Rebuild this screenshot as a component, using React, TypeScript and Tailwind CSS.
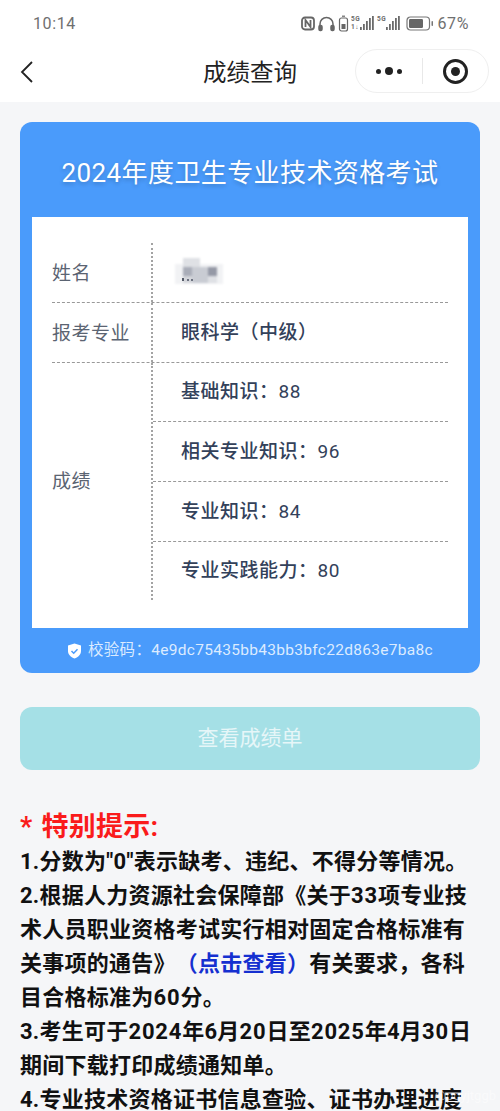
const FONT = 'font-["Roboto","Noto_Sans_CJK_SC",sans-serif]';

const SCORES = [
  { label: "基础知识", value: "88", height: "h-[59px]" },
  { label: "相关专业知识", value: "96", height: "h-[60px]" },
  { label: "专业知识", value: "84", height: "h-[60px]" },
  { label: "专业实践能力", value: "80", height: "h-[58px]" },
];

function Signal({ top, bottom }: { top: string; bottom?: string }) {
  return (
    <svg width="24" height="17" viewBox="0 0 24 17" fill="#6b6b6b">
      <text x="0" y="6" fontSize="6.500" fontWeight="700" fontFamily="Roboto">{top}</text>
      {bottom && <text x="0" y="14" fontSize="6.500" fontWeight="700" fontFamily="Roboto">{bottom}</text>}
      <rect x="9" y="12" width="1.800" height="3" />
      <rect x="12" y="9" width="1.800" height="6" />
      <rect x="15" y="6" width="1.800" height="9" />
      <rect x="18" y="3" width="1.800" height="12" />
      <rect x="21" y="1" width="1.800" height="14" />
    </svg>
  );
}

function StatusBar() {
  return (
    <div className="flex h-[46px] items-center justify-between pl-[33px] pr-[31px] pt-[1px] text-[16px] tracking-[0.6px] text-[#6f6f6f]">
      <span>10:14</span>
      <div className="flex items-center gap-[2px]">
        <svg width="14" height="15" viewBox="0 0 14 15" fill="none" stroke="#666" strokeWidth="1.800">
          <rect x="1" y="1.500" width="12" height="12" rx="3" />
          <path d="M4.500 11V4l5 7V4" />
        </svg>
        <svg width="17" height="17" viewBox="0 0 17 17" fill="none" stroke="#666" strokeWidth="1.500" className="ml-[1px]">
          <path d="M2 13V9a6.500 6.500 0 0 1 13 0v4" />
          <rect x="1" y="10.500" width="3" height="5" rx="1.200" fill="#666" />
          <rect x="13" y="10.500" width="3" height="5" rx="1.200" fill="#666" />
        </svg>
        <svg width="11" height="17" viewBox="0 0 11 17" fill="none" stroke="#666" strokeWidth="1.200" className="ml-[1px]">
          <rect x="1.500" y="3" width="8" height="13" rx="2" />
          <path d="M4 1.200h3" />
          <rect x="3.500" y="9" width="4" height="5" fill="#666" stroke="none" />
        </svg>
        <Signal top="5G" bottom="1↓" />
        <Signal top="5G" />
        <svg width="28" height="15" viewBox="0 0 28 15" fill="none" className="ml-[3px]">
          <rect x="1" y="1" width="22.500" height="13" rx="3.500" stroke="#777" strokeWidth="1.200" />
          <rect x="3" y="3" width="14" height="9" rx="1.200" fill="#666" />
          <rect x="25.500" y="5" width="1.500" height="5" rx="0.700" fill="#777" />
        </svg>
        <span className="ml-[1px]">67%</span>
      </div>
    </div>
  );
}

function NavBar() {
  return (
    <div className="relative flex h-[56px] items-center justify-center">
      <svg width="14" height="24" viewBox="0 0 14 24" fill="none" stroke="#222" strokeWidth="1.800" className="absolute left-[20px] top-[14px]">
        <path d="M12 2 2 12l10 10" />
      </svg>
      <h1 className="text-[23.500px] text-[#222]">成绩查询</h1>
      <div className="absolute right-[11px] top-[3px] flex h-[44px] w-[134px] items-center rounded-full border border-[#efefef]">
        <div className="flex w-[66px] items-center justify-center gap-[4px]">
          <span className="h-[5px] w-[5px] rounded-full bg-[#222]" />
          <span className="h-[8px] w-[8px] rounded-full bg-[#222]" />
          <span className="h-[5px] w-[5px] rounded-full bg-[#222]" />
        </div>
        <div className="h-[26px] w-px bg-[#e8e8e8]" />
        <div className="flex flex-1 items-center justify-center">
          <div className="flex h-[25px] w-[25px] items-center justify-center rounded-full border-[3px] border-[#222]">
            <div className="h-[9px] w-[9px] rounded-full bg-[#222]" />
          </div>
        </div>
      </div>
    </div>
  );
}

// mosaic over the candidate's name
function BlurredName() {
  return (
    <div className="relative h-[30px] w-[50px]">
      <div className="absolute inset-0 blur-[0.8px]">
        <div className="absolute left-0 top-[6px] h-[20px] w-[48px] bg-[#f1f2f4]" />
        <div className="absolute left-[8px] top-0 h-[9px] w-[17px] bg-[#dfe1e5]" />
        <div className="absolute left-[8px] top-[9px] h-[9px] w-[9px] bg-[#a9adb8]" />
        <div className="absolute left-[17px] top-[9px] h-[16px] w-[16px] bg-[#c9ccd3]" />
        <div className="absolute left-[33px] top-[9px] h-[9px] w-[9px] bg-[#9599a6]" />
        <div className="absolute left-[8px] top-[18px] h-[7px] w-[9px] bg-[#d4d6db]" />
        <div className="absolute left-[33px] top-[18px] h-[7px] w-[9px] bg-[#dfe1e5]" />
      </div>
      <div className="absolute left-[7px] top-[20px] h-[3px] w-[2px] bg-[#555b68]" />
      <div className="absolute left-[12px] top-[21px] h-[2px] w-[2px] bg-[#6d7280]" />
      <div className="absolute left-[16px] top-[21px] h-[2px] w-[2px] bg-[#6d7280]" />
    </div>
  );
}

function ResultCard() {
  return (
    <section className="rounded-[12px] bg-[#4a9bfb] px-[12px]">
      <h2 className="flex h-[95px] items-center justify-center pt-[8px] text-[26px] tracking-[0.4px] text-white [text-shadow:0_2px_4px_rgba(0,0,0,0.2)]">
        2024年度卫生专业技术资格考试
      </h2>
      <div className="bg-white px-[20px] pb-[28px] pt-[26px] text-[19px] tracking-[0.5px]">
        <div className="flex h-[60px] border-b border-dashed border-[#999]">
          <div className="flex w-[99px] items-center pt-[3px] text-[#5b6472]">姓名</div>
          <div className="flex flex-1 items-center border-l-2 border-dotted border-[#a3a3a3] pl-[22px]">
            <BlurredName />
          </div>
        </div>
        <div className="flex h-[60px] border-b border-dashed border-[#999]">
          <div className="flex w-[99px] items-center pt-[3px] text-[#5b6472]">报考专业</div>
          <div className="flex flex-1 items-center border-l-2 border-dotted border-[#a3a3a3] pl-[28px] pt-[2px] font-medium text-[#33415a]">
            眼科学（中级）
          </div>
        </div>
        <div className="flex">
          <div className="flex w-[99px] items-center pt-[2px] text-[#5b6472]">成绩</div>
          <div className="flex-1 border-l-2 border-dotted border-[#a3a3a3] font-medium text-[#33415a]">
            {SCORES.map((score, index) => (
              <div
                key={score.label}
                className={`flex items-center pl-[28px] pt-[1px] ${score.height} ${index < SCORES.length - 1 ? "border-b border-dashed border-[#999]" : ""}`}
              >
                <span>
                  {score.label}：<span className="font-normal">{score.value}</span>
                </span>
              </div>
            ))}
          </div>
        </div>
      </div>
      <div className="flex h-[45px] items-center justify-center gap-[6px] pt-[1px] text-[15.500px] tracking-[0.3px] text-[#dcebff]">
        <svg width="15" height="16" viewBox="0 0 15 16">
          <path d="M7.500 0.500 14 2.500v5.500c0 3.600-2.700 6.200-6.500 7.500C3.700 14.200 1 11.600 1 8V2.500z" fill="#fff" />
          <path d="m4.500 8 2.200 2.200 3.800-4" fill="none" stroke="#4a9bfb" strokeWidth="1.500" />
        </svg>
        <span>校验码：4e9dc75435bb43bb3bfc22d863e7ba8c</span>
      </div>
    </section>
  );
}

function Digits({ children }: { children: string }) {
  return <span className="tracking-[0.8px]">{children}</span>;
}

function Notes() {
  return (
    <div className="mt-[40px] text-[22px] font-bold leading-[34px] tracking-[0.25px] text-[#111]">
      <p className="text-[27px] leading-[35px] text-[#fa1b1b]">
        <span className="mr-[2px]">*</span> 特别提示:
      </p>
      <p>1.分数为"0"表示缺考、违纪、不得分等情况。</p>
      <p>
        2.根据人力资源社会保障部《关于<Digits>33</Digits>项专业技术人员职业资格考试实行相对固定合格标准有关事项的通告》
        <span className="ml-[11px] text-[#1530d0]">（点击查看）</span>
        有关要求，各科目合格标准为<Digits>60</Digits>分。
      </p>
      <p>
        3.考生可于<Digits>2024</Digits>年6月<Digits>20</Digits>日至<Digits>2025</Digits>年4月<Digits>30</Digits>日期间下载打印成绩通知单。
      </p>
      <p>4.专业技术资格证书信息查验、证书办理进度</p>
    </div>
  );
}

export default function App() {
  return (
    <div className={`relative h-[1111px] w-[500px] overflow-hidden bg-[#f5f6f8] ${FONT}`}>
      <header className="bg-white">
        <StatusBar />
        <NavBar />
      </header>
      <main className="px-[20px] pt-[20px]">
        <ResultCard />
        <button type="button" className="mt-[34px] flex h-[63px] w-full items-center justify-center rounded-[12px] bg-[#a5e0e6] text-[21px] text-[#e6f6f8]">
          查看成绩单
        </button>
        <Notes />
      </main>
      <span className="absolute bottom-[6px] right-[4px] text-[13px] text-white/50">@pgyjtggb</span>
    </div>
  );
}
